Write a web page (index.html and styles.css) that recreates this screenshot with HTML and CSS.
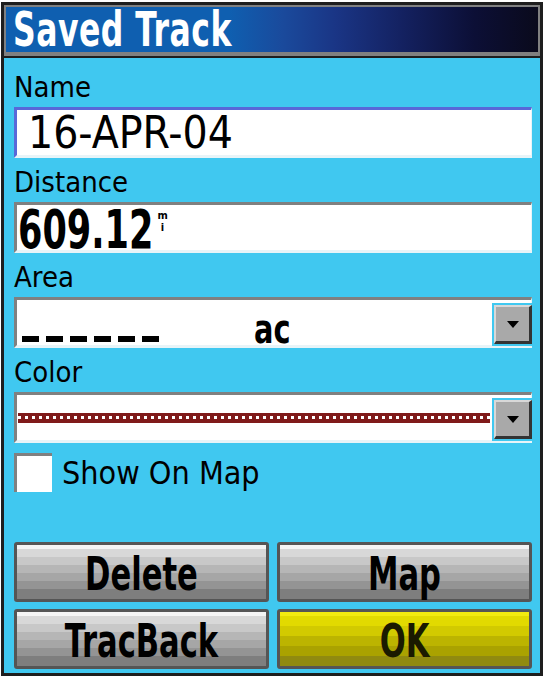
FILE: index.html
```html
<!DOCTYPE html>
<html lang="en">
<head>
    <meta charset="UTF-8">
    <meta name="viewport" content="width=device-width, initial-scale=1.0">
    <title>Saved Track</title>
    <link rel="stylesheet" href="styles.css">
</head>
<body>
    <div class="device">
        <div class="title-bar"><span class="tall">Saved Track</span></div>

        <div class="page">
            <div class="label first">Name</div>
            <div class="field focused">
                <span class="value name-value">16-APR-04</span>
            </div>

            <div class="label">Distance</div>
            <div class="field">
                <span class="value big tall">609.12</span>
                <span class="unit"><span>m</span><span>i</span></span>
            </div>

            <div class="label">Area</div>
            <div class="field select">
                <!-- empty value placeholder -->
                <span class="dashes"><i></i><i></i><i></i><i></i><i></i><i></i></span>
                <span class="area-unit tall">ac</span>
                <span class="drop-btn"><span class="arrow"></span></span>
            </div>

            <div class="label">Color</div>
            <div class="field select">
                <span class="color-line"><span class="dots"></span></span>
                <span class="drop-btn"><span class="arrow"></span></span>
            </div>

            <label class="check-row">
                <span class="checkbox"></span>
                <span>Show On Map</span>
            </label>

            <div class="buttons">
                <button class="btn"><span class="tall">Delete</span></button>
                <button class="btn"><span class="tall">Map</span></button>
                <button class="btn"><span class="tall">TracBack</span></button>
                <button class="btn btn-ok"><span class="tall">OK</span></button>
            </div>
        </div>
    </div>
</body>
</html>
```

FILE: styles.css
```css
body {
    margin: 0;
    padding: 2px 0 0 1px;
    background-color: #fff;
    font-family: "Liberation Sans Narrow", "DejaVu Sans Condensed", "Liberation Sans", sans-serif;
    color: #000;
}
.device {
    width: 536px;
    height: 668px;
    border: 3px solid #1e1e1e;
    background-color: #40c8f0;
    display: flex;
    flex-direction: column;
}
.tall {
    display: inline-block;
    transform: scaleY(1.36);
}
.title-bar {
    height: 45px;
    border: 2px solid #808080;
    border-bottom-width: 4px;
    box-shadow: 0 2px 0 #1e1e1e;
    margin-bottom: 2px;
    background: linear-gradient(90deg, #0f5fb0 0%, #0f5fb0 42%, #1a4a9c 52%, #1a3585 62%, #142262 74%, #0c0f36 88%, #0a0a1c 100%);
    color: #fff;
    font-size: 35px;
    font-weight: bold;
    line-height: 45px;
    padding-left: 7px;
    letter-spacing: 0.5px;
}
.title-bar .tall {
    transform: translateY(1px) scaleY(1.38);
}
.page {
    flex: 1;
    padding: 0 8px 4px 10px;
    display: flex;
    flex-direction: column;
}
.label {
    height: 44px;
    font-size: 29px;
    line-height: 48px;
}
.label.first {
    height: 49px;
    line-height: 58px;
}
.field {
    height: 45px;
    background-color: #fff;
    border-top: 3px solid #808080;
    border-left: 3px solid #808080;
    border-bottom: 3px solid #e8f4f8;
    border-right: 1px solid #e8f4f8;
    display: flex;
    align-items: center;
    position: relative;
}
.field.focused {
    border-top-color: #5868d8;
    border-left-color: #5868d8;
}
.value {
    font-size: 44px;
    line-height: 45px;
}
.name-value {
    padding-left: 11px;
}
.value.big {
    font-size: 39px;
    font-weight: bold;
    padding-left: 1px;
    transform: translateY(2px) scaleY(1.36);
}
.unit {
    display: inline-flex;
    flex-direction: column;
    font-size: 11px;
    font-weight: bold;
    line-height: 12px;
    align-self: flex-start;
    margin-top: 5px;
    margin-left: 4px;
    text-align: center;
}
.dashes {
    display: flex;
    gap: 7px;
    padding-left: 5px;
    align-self: flex-end;
    margin-bottom: 3px;
    width: 228px;
}
.dashes i {
    width: 17px;
    height: 6px;
    background-color: #000;
}
.area-unit {
    font-size: 32px;
    font-weight: bold;
    line-height: 32px;
    padding-left: 4px;
    transform: translateY(6px) scaleY(1.3);
}
.drop-btn {
    position: absolute;
    right: -1px;
    top: 5px;
    width: 33px;
    height: 34px;
    background-color: #a9a9a9;
    border-top: 2px solid #d8d8d8;
    border-left: 2px solid #d8d8d8;
    border-right: 3px solid #333;
    border-bottom: 3px solid #333;
    box-shadow: 0 0 0 2px #40c8f0;
    display: flex;
    align-items: center;
    justify-content: center;
}
.arrow {
    width: 0;
    height: 0;
    border-left: 6px solid transparent;
    border-right: 6px solid transparent;
    border-top: 7px solid #000;
}
.color-line {
    margin-left: 1px;
    width: 472px;
    height: 10px;
    background-color: #801a1a;
    display: flex;
    align-items: center;
}
.dots {
    width: 100%;
    height: 3px;
    background: repeating-linear-gradient(90deg, #fff 0 3px, transparent 3px 7px);
}
.check-row {
    display: flex;
    align-items: center;
    gap: 10px;
    margin-top: 10px;
    font-size: 32px;
}
.checkbox {
    background-color: #fff;
    border-top: 3px solid #808080;
    border-left: 3px solid #808080;
    box-sizing: border-box;
    width: 38px;
    height: 39px;
}
.buttons {
    margin-top: auto;
    display: grid;
    grid-template-columns: 1fr 1fr;
    column-gap: 8px;
    row-gap: 7px;
}
.btn {
    height: 60px;
    border: 3px solid #555;
    border-radius: 3px;
    padding: 0;
    font-family: inherit;
    font-size: 34px;
    font-weight: bold;
    color: #000;
    background: linear-gradient(180deg, #f4f4f4 0 4px, #d8d8d8 4px 12px, #c8c8c8 12px 20px, #b6b6b6 20px 28px, #a6a6a6 28px 36px, #949494 36px 44px, #7e7e7e 44px);
}
.btn .tall {
    transform: translateY(2px) scaleY(1.36);
}
.btn-ok {
    color: #1a1a00;
    background: linear-gradient(180deg, #f2ea10 0 4px, #e2da00 4px 14px, #d2ca00 14px 24px, #bcb400 24px 34px, #aaa200 34px 44px, #908a10 44px);
}
```
